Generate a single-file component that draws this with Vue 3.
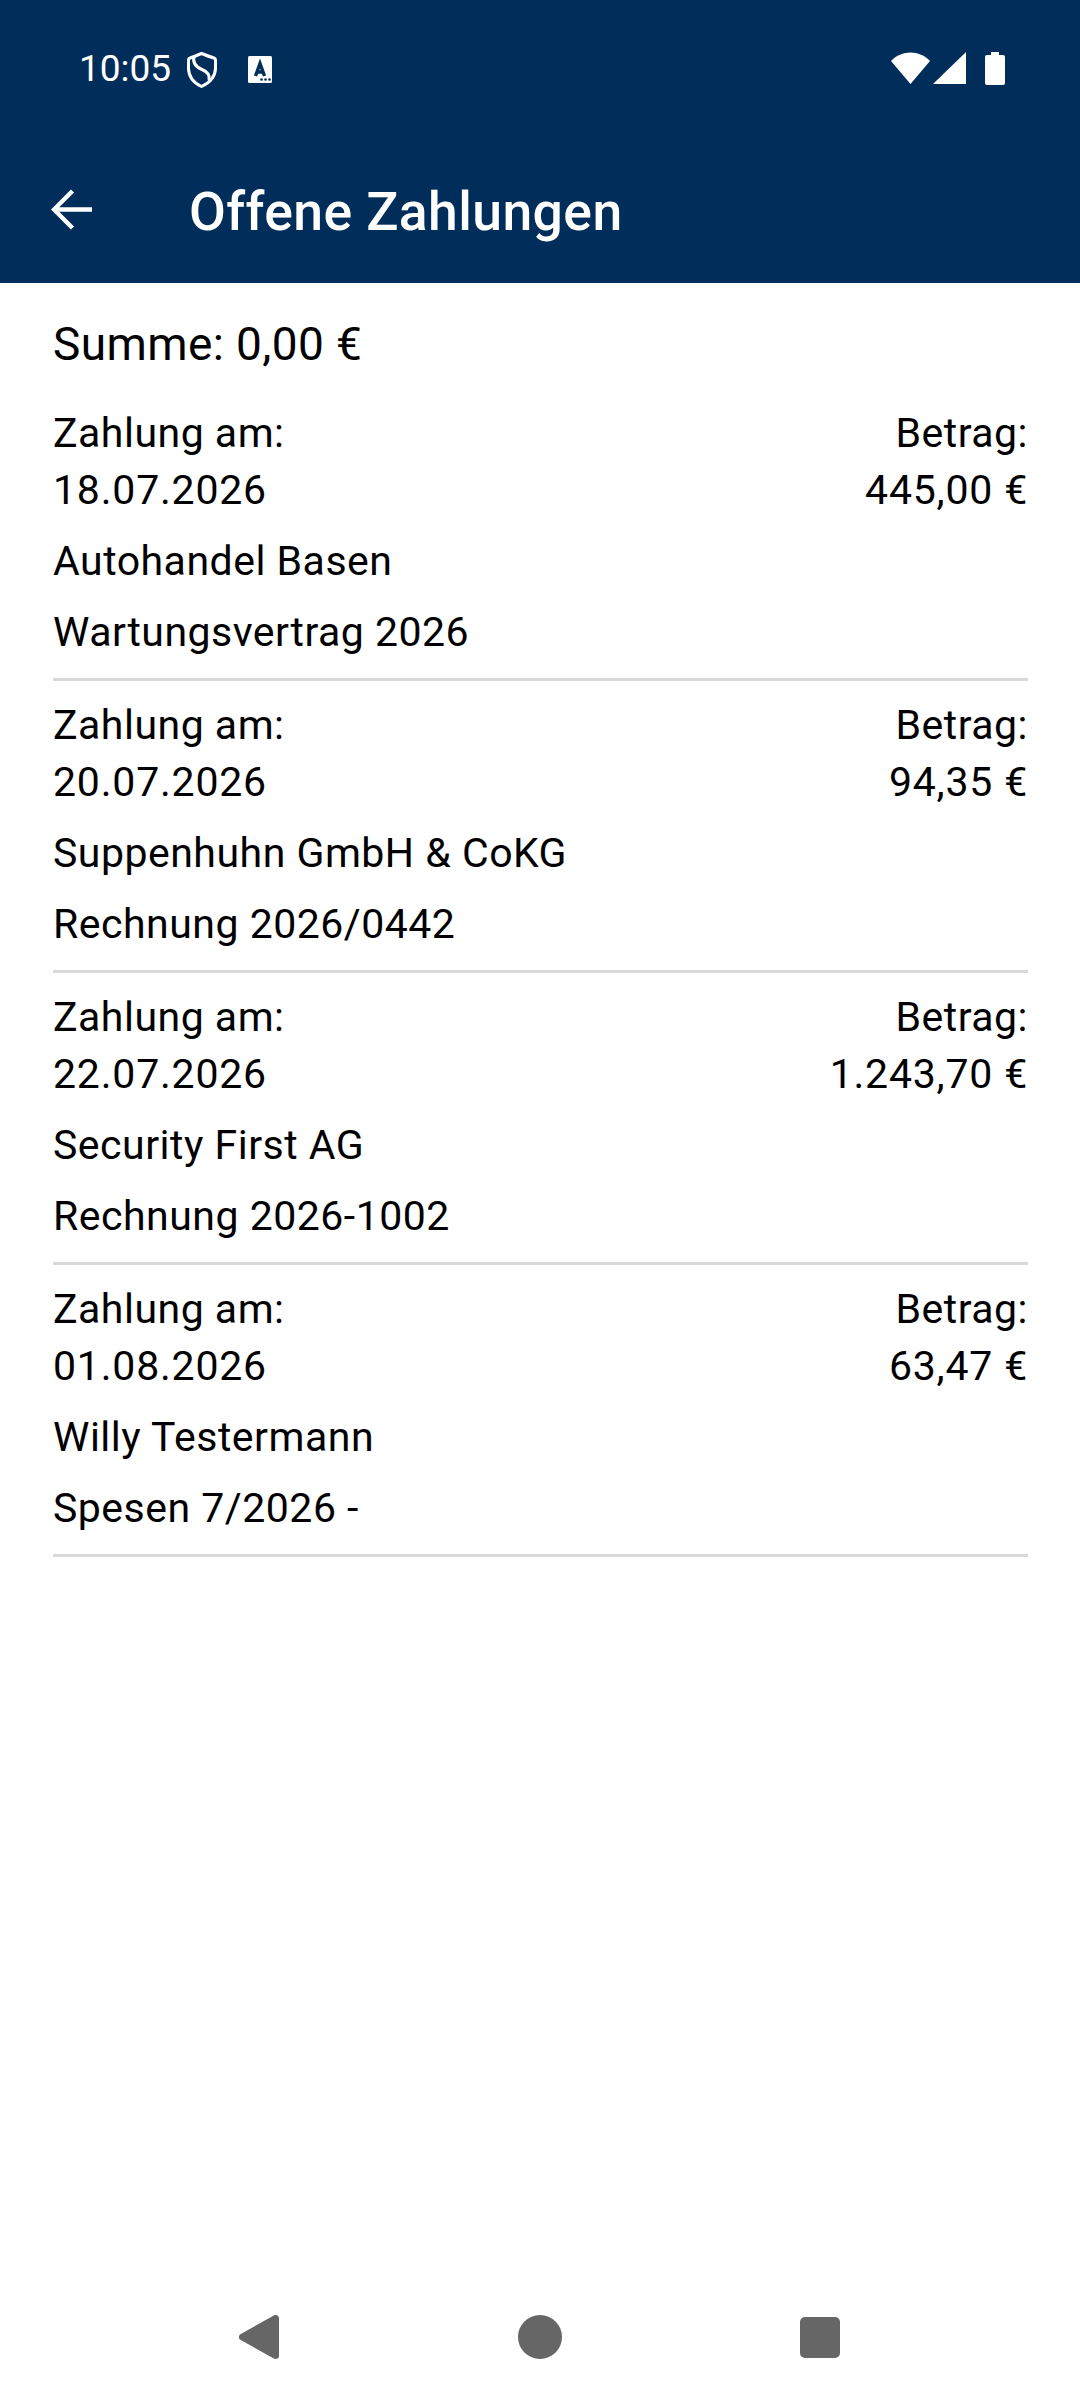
<script setup>
const payments = [
  { date: "18.07.2026", amount: "445,00 €", name: "Autohandel Basen", ref: "Wartungsvertrag 2026" },
  { date: "20.07.2026", amount: "94,35 €", name: "Suppenhuhn GmbH & CoKG", ref: "Rechnung 2026/0442" },
  { date: "22.07.2026", amount: "1.243,70 €", name: "Security First AG", ref: "Rechnung 2026-1002" },
  { date: "01.08.2026", amount: "63,47 €", name: "Willy Testermann", ref: "Spesen 7/2026 -" },
];
</script>

<template>
  <div class="screen">
    <header class="header">
      <div class="status">
        <span class="time">10:05</span>
        <svg class="shield" width="30" height="36" viewBox="0 0 30 36">
          <path d="M14.5 1.5 C18 3 24 5 27 6 Q28.5 6.5 28.5 8 V16 C28.5 25 22 31 14.5 34.5 C7 31 1.5 25 1.5 16 V8 Q1.5 6.5 3 6 C6 5 11 3 14.5 1.5 Z" fill="none" stroke="#fff" stroke-width="3" stroke-linejoin="round" />
          <path d="M7 4.5 C5.5 11 9 15 15 17.5 C20 19.5 23 23 22 28" fill="none" stroke="#fff" stroke-width="3" />
        </svg>
        <svg class="acc" width="24" height="27" viewBox="0 0 24 27">
          <path d="M1.5 0 H22.5 Q24 0 24 1.5 V25.5 Q24 27 22.5 27 H1.5 Q0 27 0 25.5 V1.5 Q0 0 1.5 0 Z" fill="#fff" />
          <path d="M7.5 20 L12 7.5 L16.5 20 M9 16 H15" fill="none" stroke="#002d5a" stroke-width="3.4" />
          <circle cx="13.5" cy="23.5" r="1.3" fill="#002d5a" />
          <circle cx="17.5" cy="23.5" r="1.3" fill="#002d5a" />
          <circle cx="21.5" cy="23.5" r="1.3" fill="#002d5a" />
        </svg>
        <span class="spacer"></span>
        <svg width="39" height="32" viewBox="0 0 39 32">
          <path d="M0 9 C10.5 -2.5 28.5 -2.5 39 9 L19.5 32 Z" fill="#fff" />
        </svg>
        <svg class="signal" width="33" height="32" viewBox="0 0 33 32">
          <path d="M33 0 V32 H0 Z" fill="#fff" />
        </svg>
        <svg class="battery" width="20" height="33" viewBox="0 0 20 33">
          <path d="M6 0 H14 V3 H18 Q20 3 20 5 V31 Q20 33 18 33 H2 Q0 33 0 31 V5 Q0 3 2 3 H6 Z" fill="#fff" />
        </svg>
      </div>
      <div class="toolbar">
        <svg class="back" width="41" height="41" viewBox="0 0 41 41">
          <path d="M41 20.5 H3 M21.5 2 L3 20.5 L21.5 39" fill="none" stroke="#fff" stroke-width="4.4" />
        </svg>
        <h1 class="title">Offene Zahlungen</h1>
      </div>
    </header>

    <main class="content">
      <div class="sum">Summe: 0,00 €</div>
      <div v-for="p in payments" :key="p.date" class="payment">
        <div class="top">
          <div>Zahlung am:<br /><span class="num">{{ p.date }}</span></div>
          <div class="right">Betrag:<br /><span class="num">{{ p.amount }}</span></div>
        </div>
        <div class="line">{{ p.name }}</div>
        <div class="line second">{{ p.ref }}</div>
      </div>
    </main>

    <nav class="navbar">
      <svg width="40" height="44" viewBox="0 0 40 44">
        <path d="M36.5 3.5 V40.5 L3.5 22 Z" fill="#666" stroke="#666" stroke-width="7" stroke-linejoin="round" />
      </svg>
      <div class="dot"></div>
      <div class="square"></div>
    </nav>
  </div>
</template>

<style scoped>
.screen {
  display: flex;
  flex-direction: column;
  height: 2400px;
  font-family: Roboto, "Liberation Sans", sans-serif;
  color: #000;
  background: #fff;
}

.header {
  height: 283px;
  background: #002d5a;
  color: #fff;
}

.status {
  display: flex;
  align-items: center;
  height: 136px;
  padding: 0 75px 0 79px;
}

.time {
  font-size: 37px;
}

.shield {
  margin: 3px 0 0 16px;
}

.acc {
  margin: 2px 0 0 31px;
}

.spacer {
  flex: 1;
}

.signal {
  margin-left: 3px;
}

.battery {
  margin-left: 19px;
}

.toolbar {
  display: flex;
  align-items: center;
  height: 147px;
  padding-left: 51px;
}

.title {
  margin: 4px 0 0 97px;
  font-size: 53.5px;
  font-weight: 500;
  letter-spacing: 0.4px;
}

.content {
  flex: 1;
  padding: 0 52px 0 53px;
  font-size: 41px;
  line-height: 56.5px;
  letter-spacing: 0.5px;
}

.sum {
  margin-top: 31px;
  margin-bottom: 15px;
  font-size: 46px;
  line-height: 60px;
  letter-spacing: 0.4px;
}

.payment {
  padding: 16px 0 18px;
  border-bottom: 3px solid #d9d9d9;
}

.top {
  display: flex;
  justify-content: space-between;
}

.right {
  text-align: right;
}

.num {
  letter-spacing: 0.8px;
}

.line {
  margin-top: 15px;
  line-height: 56px;
}

.second {
  margin-top: 15px;
}

.navbar {
  display: flex;
  align-items: center;
  justify-content: space-between;
  height: 66px;
  margin-bottom: 30px;
  padding: 0 240px 0 239px;
}

.dot {
  width: 44px;
  height: 44px;
  border-radius: 50%;
  background: #666;
}

.square {
  width: 40px;
  height: 41px;
  border-radius: 5px;
  background: #666;
}
</style>
